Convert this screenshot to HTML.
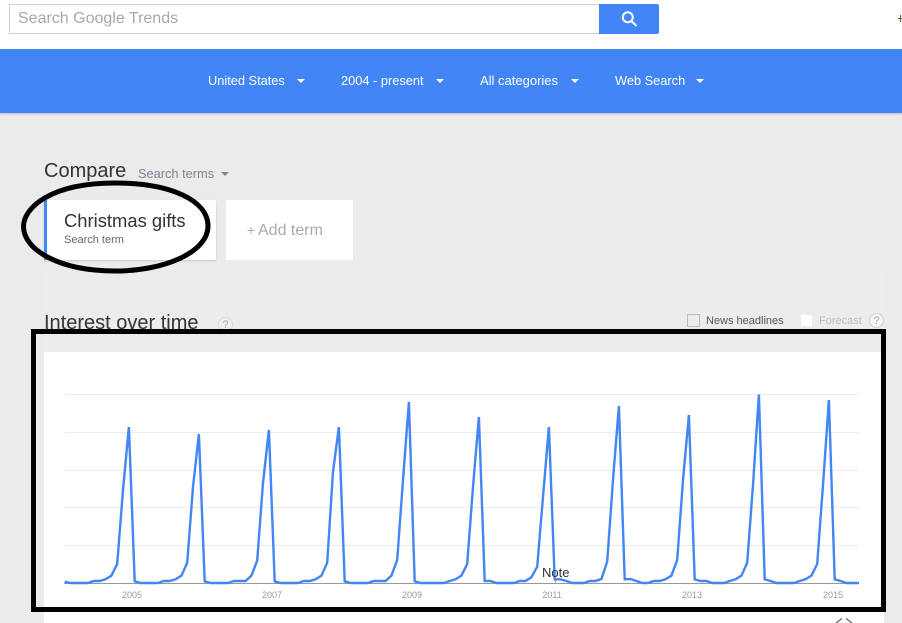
<!DOCTYPE html>
<html>
<head>
<meta charset="utf-8">
<style>
html,body{margin:0;padding:0;}
body{width:902px;height:623px;overflow:hidden;position:relative;background:#ebebeb;font-family:"Liberation Sans",sans-serif;}
.a{position:absolute;white-space:nowrap;}
.tri{position:absolute;width:0;height:0;border-left:4px solid transparent;border-right:4px solid transparent;border-top:4px solid #fff;}
</style>
</head>
<body>
<div class="a" style="left:0;top:0;width:902px;height:49px;background:#fff;"></div>
<div class="a" style="left:9px;top:4px;width:589px;height:28px;border:1px solid #d0d0d0;border-right:0;background:#fff;"></div>
<div class="a" style="left:18px;top:9px;font-size:16px;line-height:19px;color:#a8a8a8;">Search Google Trends</div>
<div class="a" style="left:599px;top:4px;width:60px;height:30px;background:#4285f4;border-radius:0 2px 2px 0;"></div>
<svg class="a" style="left:620px;top:10px;" width="20" height="20" viewBox="0 0 20 20"><circle cx="7.8" cy="7.3" r="5" fill="none" stroke="#fff" stroke-width="2"/><path d="M11.5 11l5 5" stroke="#fff" stroke-width="2.2" fill="none"/></svg>
<div class="a" style="left:898px;top:18px;width:4px;height:1px;background:#6b5a48;"></div>
<div class="a" style="left:900px;top:15px;width:1px;height:7px;background:#6b5a48;"></div>

<div class="a" style="left:0;top:49px;width:902px;height:64px;background:#4285f4;box-shadow:0 1px 2px rgba(0,0,0,.2);"></div>
<div class="a" style="left:208px;top:73px;font-size:12.8px;line-height:15px;color:#fff;">United States</div>
<div class="tri" style="left:297px;top:79px;"></div>
<div class="a" style="left:341px;top:73px;font-size:12.8px;line-height:15px;color:#fff;">2004 - present</div>
<div class="tri" style="left:436px;top:79px;"></div>
<div class="a" style="left:480px;top:73px;font-size:13px;line-height:15px;color:#fff;">All categories</div>
<div class="tri" style="left:571px;top:79px;"></div>
<div class="a" style="left:615px;top:73px;font-size:12.8px;line-height:15px;color:#fff;">Web Search</div>
<div class="tri" style="left:696px;top:79px;"></div>

<div class="a" style="left:44px;top:272px;width:840px;height:351px;background:#ececec;"></div>

<div class="a" style="left:44px;top:159px;font-size:20px;line-height:24px;color:#333;">Compare</div>
<div class="a" style="left:138px;top:166px;font-size:12.8px;line-height:15px;color:#7d8390;">Search terms</div>
<div class="tri" style="left:221px;top:172px;border-top-color:#7d8390;"></div>

<div class="a" style="left:44px;top:200px;width:172px;height:60px;background:#fff;border-radius:2px;box-shadow:0 1px 2px rgba(0,0,0,.15);"></div>
<div class="a" style="left:44px;top:200px;width:3px;height:60px;background:#4285f4;"></div>
<div class="a" style="left:64px;top:210px;font-size:18.4px;line-height:22px;color:#333;">Christmas gifts</div>
<div class="a" style="left:64px;top:233px;font-size:11px;line-height:14px;color:#666;">Search term</div>
<div class="a" style="left:226px;top:200px;width:127px;height:60px;background:#fff;border-radius:2px;"></div>
<div class="a" style="left:247px;top:221px;font-size:14px;line-height:19px;color:#aaa;">+</div>
<div class="a" style="left:258px;top:221px;font-size:16px;line-height:19px;color:#aaa;">Add term</div>

<div class="a" style="left:44px;top:311px;font-size:20px;line-height:24px;color:#333;">Interest over time</div>
<div class="a" style="left:218px;top:317px;width:13px;height:13px;border:1px solid #d8d8d8;border-radius:50%;background:#f0f0f0;font-size:11px;line-height:14px;text-align:center;color:#aaa;">?</div>
<div class="a" style="left:687px;top:314px;width:11px;height:11px;border:1px solid #bbb;"></div>
<div class="a" style="left:706px;top:314px;font-size:11px;line-height:14px;color:#555;">News headlines</div>
<div class="a" style="left:801px;top:315px;width:11px;height:11px;background:#fff;"></div>
<div class="a" style="left:819px;top:314px;font-size:11px;line-height:14px;color:#bbb;">Forecast</div>
<div class="a" style="left:869px;top:313px;width:13px;height:13px;border:1px solid #d0d0d0;border-radius:50%;background:#f4f4f4;font-size:11px;line-height:14px;text-align:center;color:#aaa;">?</div>

<div class="a" style="left:44px;top:352px;width:837px;height:255px;background:#fff;"></div>
<div class="a" style="left:44px;top:612px;width:840px;height:11px;background:#fff;"></div>

<svg class="a" style="left:0;top:0;" width="902" height="623" viewBox="0 0 902 623">
<g stroke="#ececec" stroke-width="1" fill="none">
<path d="M65 394.5H859M65 432.5H859M65 470.5H859M65 507.5H859M65 545.5H859"/>
</g>
<path d="M64 583.5H859" stroke="#999" stroke-width="1" fill="none"/>
<path d="M555.5 578V583" stroke="#aaa" stroke-width="1" fill="none"/>
<polyline fill="none" stroke="#4285f4" stroke-width="2.4" stroke-linejoin="miter" stroke-miterlimit="10" points="64.7,581.7 70.5,583 88,583 93.9,581 99.7,581 105.5,579.3 111.4,575.7 117.2,564 123,490 128.9,427 134.7,581.3 140.5,583 158,583 163.9,581 169.7,581 175.5,579.3 181.4,575.7 187.2,562.7 193,487 198.9,434 204.7,581.3 210.5,583 228,583 233.9,581 239.7,581 245.5,581 251.4,575.7 257.2,560.5 263,483 268.9,430 274.7,581.3 280.5,583 298,583 303.9,581 309.7,581 315.5,579.3 321.4,575.7 327.2,562.7 333,471.7 338.9,427 344.7,581.3 350.5,583 368,583 373.9,581 379.7,581 385.5,581 391.4,575.7 397.2,560 403,480 408.9,402 414.7,581.3 420.5,583 438,583 443.9,583 449.7,581 455.5,579.3 461.4,575.7 467.2,564 473,487 478.9,417 484.7,581 490.5,581 496.4,583 508,583 513.9,583 519.7,581 525.5,581 531.4,577.3 537.2,566.7 543,497 548.9,427 554.7,579.3 560.5,579.3 566.4,581 572.2,583 584,583 589.7,581 595.5,581 601.4,579 607.2,561.7 613,480 618.9,406 624.7,579.3 630.5,579 636.4,581 642.2,583 648,583 653.9,581 659.7,581 665.5,579.3 671.4,575.7 677.2,560 683,480 688.9,415 694.7,579.3 700.5,581 706.4,581 712.2,583 724,583 729.7,581 735.5,579.3 741.4,575.7 747.2,562.7 753,485 758.9,394.5 764.7,579.3 770.5,581 776.4,583 794,583 799.7,581 805.5,579.3 811.4,575.7 817.2,564 823,485 828.9,400 834.7,579.3 840.5,581 846.4,583 859,583"/>
<g font-family="Liberation Sans, sans-serif" font-size="9" fill="#999" text-anchor="middle">
<text x="132" y="598">2005</text>
<text x="272" y="598">2007</text>
<text x="412" y="598">2009</text>
<text x="552" y="598">2011</text>
<text x="692" y="598">2013</text>
<text x="833" y="598">2015</text>
</g>
<text x="542" y="577" font-family="Liberation Sans, sans-serif" font-size="13" fill="#333">Note</text>
<path d="M23.5 226C24 208 50 183 115 183C170 183 208 200 208 226C208 252 165 271 115 271C60 271 23 250 23.5 226Z" fill="none" stroke="#000" stroke-width="5"/>
<rect x="33.5" y="331.5" width="850" height="278" fill="none" stroke="#000" stroke-width="5"/>
<path d="M836 623L842 618.5M846 618.5L852 623" stroke="#666" stroke-width="1.2" fill="none"/>
</svg>
</body>
</html>
